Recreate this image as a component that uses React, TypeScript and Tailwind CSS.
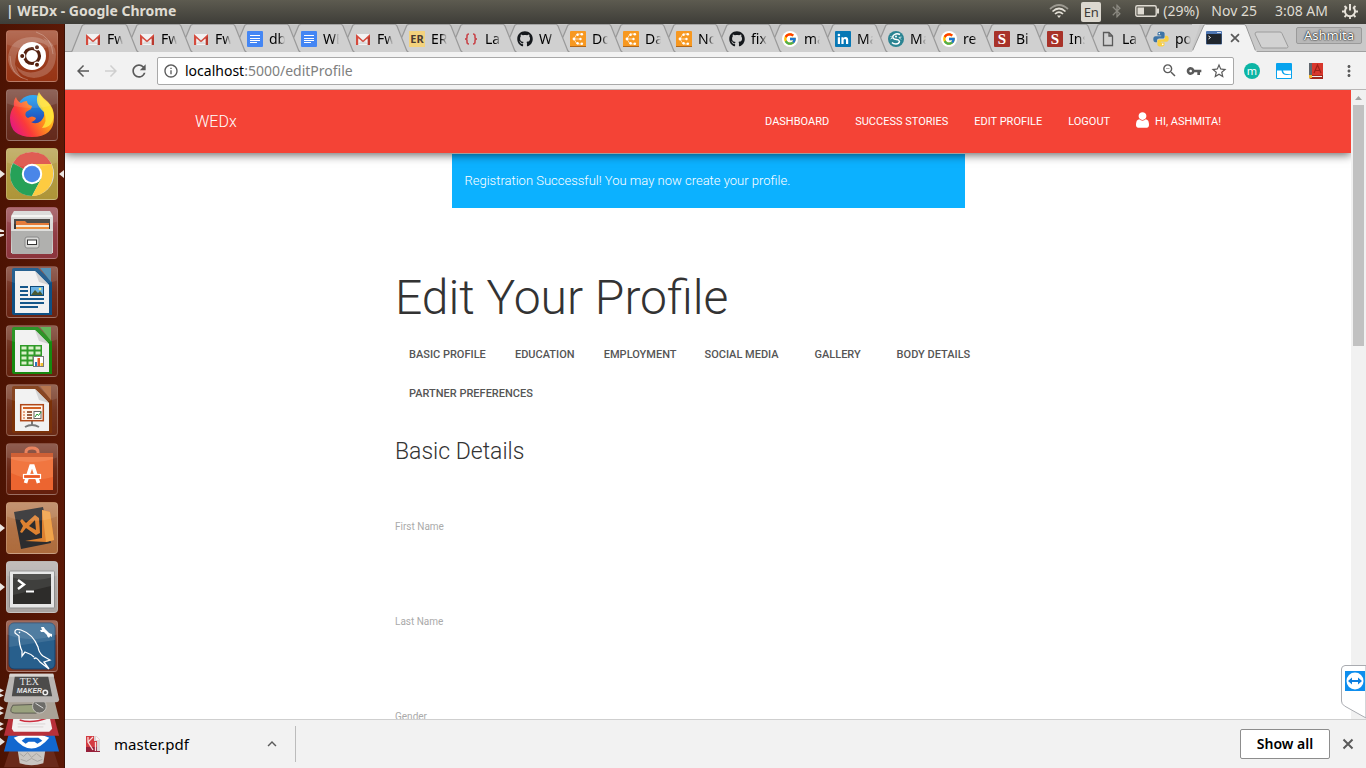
import React from "react";
import {
  MdArrowBack,
  MdArrowForward,
  MdRefresh,
  MdInfoOutline,
  MdZoomOut,
  MdVpnKey,
  MdStarBorder,
  MdMoreVert,
  MdExpandLess,
  MdBluetooth,
} from "react-icons/md";
import { FaGithub } from "react-icons/fa";
import { FcGoogle } from "react-icons/fc";

/* ---------- Favicons ---------- */

const Gmail = () => (
  <svg viewBox="0 0 16 16" className="size-4">
    <path d="M1 3h14v11H1z" fill="#f2f2f2" />
    <path d="M3 13l5-5 5 5z" fill="#dcdcdc" />
    <path d="M1 3l7 6.4L15 3v11h-2.200V7.200L8 11.300 3.200 7.200V14H1z" fill="#d54b3d" />
    <path d="M12.800 7.200L15 5v9h-2.200z" fill="#b93a2f" />
  </svg>
);

const Docs = () => (
  <svg viewBox="0 0 16 16" className="size-4">
    <rect width="16" height="16" rx="1" fill="#4486f4" />
    <path d="M3 4.500h10M3 7.500h10M3 9.500h10M3 11.500h7" stroke="#fff" strokeWidth="1" />
  </svg>
);

const Er = () => (
  <span className="flex size-4 items-center justify-center bg-[#f3d27d] text-[11px] leading-4 font-bold text-[#4a3b33]">
    ER
  </span>
);

const Braces = () => (
  <svg viewBox="0 0 16 16" className="size-4" fill="none" stroke="#c8474c" strokeWidth="1.600">
    <path d="M6 3Q4 3 4 5v1.500Q4 8 2 8q2 0 2 1.500V11q0 2 2 2M10 3q2 0 2 2v1.500Q12 8 14 8q-2 0-2 1.500V11q0 2-2 2" />
  </svg>
);

const Github = () => <FaGithub className="size-4 text-[#15181c]" />;

const Lucid = () => (
  <svg viewBox="0 0 16 16" className="size-4">
    <rect width="16" height="16" rx="1" fill="#f79820" />
    <path d="M0 15h16v1H0z" fill="#b0661a" />
    <path d="M11.500 3H7L4 8l3 5h4.500M4 8h7" stroke="#fde6c8" strokeWidth=".8" fill="none" />
    <g fill="#fff">
      <circle cx="11.800" cy="3.200" r="1.300" />
      <circle cx="7.600" cy="3.800" r="1.200" />
      <circle cx="4" cy="8" r="1.400" />
      <circle cx="10.500" cy="8" r="1.200" />
      <circle cx="7.600" cy="12.200" r="1.200" />
      <circle cx="11.800" cy="12.800" r="1.300" />
    </g>
  </svg>
);

const Google = () => (
  <span className="flex size-4 items-center justify-center rounded-full bg-white">
    <FcGoogle className="size-3.5" />
  </span>
);

const LinkedIn = () => (
  <svg viewBox="0 0 16 16" className="size-4">
    <rect width="16" height="16" rx="1" fill="#0878b5" />
    <circle cx="3.900" cy="4" r="1.300" fill="#fff" />
    <path d="M2.800 6.200H5V13H2.800zM6.400 6.200h2.100v1c.4-.7 1.200-1.200 2.200-1.200 2 0 2.500 1.300 2.500 3.200V13H11V9.600c0-.9-.1-1.700-1.100-1.700S8.600 8.700 8.600 9.600V13H6.400z" fill="#fff" />
  </svg>
);

const Teal = () => (
  <svg viewBox="0 0 16 16" className="size-4">
    <circle cx="8" cy="8" r="8" fill="#2b8492" />
    <path d="M12 3.500Q9 2 6.500 3.500T5 7q1 1.500 3.500 1.500t3 2Q11 13 8 13t-4-1.500" stroke="#fff" strokeWidth="1.400" fill="none" />
    <path d="M2.500 5l2 2-2 1M13.500 6l-2.500.5 2 2" stroke="#cfe6e9" strokeWidth="1" fill="none" />
    <circle cx="8" cy="5.500" r="1" fill="#fff" />
  </svg>
);

const Slant = () => (
  <span className="flex size-4 items-center justify-center rounded-[1px] bg-[#a83229] font-['Liberation_Serif',serif] text-[15px] leading-4 font-bold text-white">
    S
  </span>
);

const PageIcon = () => (
  <svg viewBox="0 0 16 16" className="size-4" fill="none" stroke="#5a5a5a" strokeWidth="1.300">
    <path d="M3.500 1.500H9L12.500 5v9.500h-9zM9 1.500V5h3.500" />
  </svg>
);

const Python = () => (
  <svg viewBox="0 0 16 16" className="size-4">
    <path d="M8 .5C5.500.5 4.500 1.200 4.500 2.600v1.900h3.700v.7H2.600C1 5.200.3 6.500.3 8.200s.8 3 2.200 3H4V9.500C4 8.200 5 7.500 6.200 7.500h3.600c1 0 1.800-.8 1.800-1.800V2.600C11.600 1.200 10.500.5 8 .5z" fill="#3d74a6" />
    <path d="M8 15.500c2.500 0 3.500-.7 3.500-2.100v-1.900H7.800v-.7h5.600c1.600 0 2.300-1.300 2.300-3s-.8-3-2.200-3H12v1.700c0 1.300-1 2-2.200 2H6.200c-1 0-1.800.8-1.800 1.800v3.100c0 1.400 1.100 2.100 3.600 2.100z" fill="#f9cf42" />
    <circle cx="6.300" cy="2.600" r=".8" fill="#fff" />
    <circle cx="9.700" cy="13.400" r=".8" fill="#fff" />
  </svg>
);

const TermFav = () => (
  <svg viewBox="0 0 16 16" className="size-4">
    <rect y="1" width="16" height="13.500" rx="1" fill="#4d76b3" />
    <rect x=".5" y="4" width="15" height="10" fill="#20262e" />
    <path d="M2.500 6l2 1.500-2 1.500" stroke="#fff" strokeWidth="1" fill="none" />
    <path d="M11 2.500h4" stroke="#cfdcf0" strokeWidth="1" />
  </svg>
);

const Cross = ({ className }: { className: string }) => (
  <svg viewBox="0 0 16 16" className={className} fill="none" stroke="currentColor" strokeWidth="2">
    <path d="M3.500 3.500l9 9M12.500 3.500l-9 9" />
  </svg>
);

const tabs: { icon: () => React.ReactElement; title: string }[] = [
  { icon: Gmail, title: "Fw" },
  { icon: Gmail, title: "Fw" },
  { icon: Gmail, title: "Fw" },
  { icon: Docs, title: "db" },
  { icon: Docs, title: "WE" },
  { icon: Gmail, title: "Fw" },
  { icon: Er, title: "ER" },
  { icon: Braces, title: "La" },
  { icon: Github, title: "W" },
  { icon: Lucid, title: "Do" },
  { icon: Lucid, title: "Da" },
  { icon: Lucid, title: "No" },
  { icon: Github, title: "fix" },
  { icon: Google, title: "ma" },
  { icon: LinkedIn, title: "Ma" },
  { icon: Teal, title: "Ma" },
  { icon: Google, title: "re" },
  { icon: Slant, title: "Bi" },
  { icon: Slant, title: "Ins" },
  { icon: PageIcon, title: "La" },
  { icon: Python, title: "po" },
];

/* ---------- Launcher icons (52 x 52 artwork) ---------- */

const UbuntuIcon = () => (
  <>
    <path d="M2 30Q2 8 26 7q14 0 19 12-7-8-19-7Q10 14 9 34q2 10 9 15Q4 44 2 30zM50 24q0 22-22 24-14-1-18-12 8 8 19 6 15-3 14-20-1-8-6-14 12 4 13 16z" fill="#fff" fillOpacity=".2" />
    <path d="M30 2q16 5 17 22M22 50Q4 46 4 26" stroke="#fff" strokeOpacity=".25" fill="none" />
    <circle cx="26" cy="26" r="14" fill="#fff" />
    <circle cx="26" cy="26" r="7.500" fill="none" stroke="#54200f" strokeWidth="3.200" />
    <g fill="#54200f" stroke="#fff" strokeWidth="1.200">
      <circle cx="16.200" cy="26" r="2.600" />
      <circle cx="31" cy="17.300" r="2.600" />
      <circle cx="31" cy="34.700" r="2.600" />
    </g>
  </>
);

const FirefoxIcon = () => (
  <>
    <defs>
      <linearGradient id="ff" x1="0" y1=".8" x2="1" y2=".2">
        <stop offset="0" stopColor="#e0148c" />
        <stop offset=".3" stopColor="#fb3a3a" />
        <stop offset=".65" stopColor="#ff9a1a" />
        <stop offset="1" stopColor="#ffe234" />
      </linearGradient>
      <linearGradient id="ffb" x1="0" y1="0" x2="0" y2="1">
        <stop offset="0" stopColor="#1ba2f2" />
        <stop offset="1" stopColor="#2635a8" />
      </linearGradient>
    </defs>
    <circle cx="27" cy="23" r="17" fill="url(#ffb)" />
    <path d="M10 8q1 4 5 6 3-2 6-2 0 4 5 5l-1 3-5 3q-2 4 2 6 4-3 8 0-1 3-5 4 5 3 10-1 5-5 2-12-7-8-3-15 3 4 8 8 6 6 6 15 0 20-22 20T4 29q0-6 4-12-1-5 2-9z" fill="url(#ff)" />
    <path d="M33 3q3 7 9 11 7 8 5 17-3 8-11 8 6-7 2-16-11-9-5-20z" fill="#ffe63b" fillOpacity=".85" />
  </>
);

const ChromeIcon = () => (
  <>
    <circle cx="26" cy="26" r="22" fill="#ddd" />
    <path d="M26 26L7 15Q13 4 26 4t19 11v3H26z" fill="#dc4b40" />
    <path d="M26 26L7 15q-7 15 3 26 6 7 16 7l9-17z" fill="#26a158" />
    <path d="M26 16h19.500Q50 28 43 39.500 36 48 26 48l9-17z" fill="#fdcb41" />
    <circle cx="26" cy="26" r="10.200" fill="#fff" />
    <circle cx="26" cy="26" r="8.200" fill="#4a86e8" />
  </>
);

const FilesIcon = () => (
  <>
    <path d="M8 4h36l3 5v37H5V9z" fill="#d9d9d7" />
    <path d="M6 8h40v2H6z" fill="#f3f3f1" />
    <path d="M8 12h36v13H8z" fill="#3b3936" />
    <path d="M10 14h9l2 2h22v9H10z" fill="#e46e24" />
    <path d="M10 18h33v7H10z" fill="#f6ead5" />
    <path d="M10 20h33v5H10z" fill="#ef8f3c" />
    <path d="M5 22h42l-1 25H6z" fill="#b0b0ae" />
    <path d="M5 22h42v2H5z" fill="#dededc" />
    <rect x="19" y="30" width="14" height="11" rx="2" fill="#d7d7d5" stroke="#888" />
    <rect x="21.500" y="33" width="9" height="4.500" fill="#fff" stroke="#333" />
  </>
);

const sheet = (edge: string, corner: string) => (
  <>
    <path d="M8 2h24l14 14v33H8q-2 0-2-2V4q0-2 2-2z" fill={edge} />
    <path d="M34 2h11v14z" fill={corner} />
    <path d="M9 5h20l14 14v28H9z" fill="#f1f1f1" />
    <path d="M29 5l14 14-10-3z" fill="#cfcfcf" />
  </>
);

const WriterIcon = () => (
  <>
    {sheet("#0f5084", "#4386ad")}
    <path d="M14 21h8M14 25h8M14 29h8M14 33h24M14 37h24M14 41h18" stroke="#15578a" strokeWidth="2" />
    <rect x="24.500" y="20.500" width="13" height="9" fill="#6bb3e4" stroke="#0e4b7a" />
    <path d="M25 29l4-5 3 3 2-2 3 4z" fill="#4b5a32" />
    <circle cx="34" cy="23" r="1.300" fill="#fff07a" />
  </>
);

const CalcIcon = () => (
  <>
    {sheet("#178a10", "#52ad49")}
    <path d="M14 20h22v21H14z" fill="#2f9a28" />
    <path d="M15.500 21.500h5v3h-5zm7 0h5v3h-5zm7 0h5v3h-5zm-14 5h5v3h-5zm7 0h5v3h-5zm7 0h5v3h-5zm-14 5h5v3h-5zm7 0h4v3h-4zm-7 5h5v3h-5zm7 0h4v3h-4z" fill="#d9f0c9" />
    <rect x="27.500" y="31.500" width="10" height="10" fill="#fff" stroke="#777" />
    <path d="M29 37h2v4h-2z" fill="#2a78c0" />
    <path d="M31.500 33h2.500v8h-2.500z" fill="#df5a28" />
    <path d="M34.500 38H37v3h-2.500z" fill="#f0c02d" />
  </>
);

const ImpressIcon = () => (
  <>
    {sheet("#7b3209", "#b0683c")}
    <path d="M26 37v5M19 43q7-4 14 0" stroke="#777" strokeWidth="2" fill="none" />
    <rect x="14.700" y="20.700" width="22.600" height="16" fill="#fff4ea" stroke="#b04718" strokeWidth="1.500" />
    <path d="M17 24h18" stroke="#d26023" strokeWidth="2" />
    <path d="M17 28h2M17 31h2M17 34h2" stroke="#e08b62" strokeWidth="1.600" />
    <path d="M21 28h5M21 31h5M21 34h5" stroke="#7a2e0b" strokeWidth="1.600" />
    <rect x="28" y="27.500" width="7" height="7" fill="#fff" stroke="#666" />
    <path d="M29 33l2-3 1.500 1.500L35 28" stroke="#259a31" fill="none" />
  </>
);

const SoftwareIcon = () => (
  <>
    <path d="M20 14V9q0-4 6-4t6 4v5" stroke="#e8764d" strokeWidth="3" fill="none" />
    <path d="M5 10h42v37H5z" fill="#ec6530" />
    <path d="M5 10h42v4H5z" fill="#c94e20" />
    <path d="M5 14h42v20Q26 40 5 30z" fill="#f58850" fillOpacity=".5" />
    <path d="M19.500 40L25 23h2l5.500 17" stroke="#fff" strokeWidth="3.600" fill="none" />
    <rect x="17.500" y="31.500" width="17" height="4" fill="#ec5a24" stroke="#fff" strokeWidth="1.200" />
  </>
);

const CodeIcon = () => (
  <>
    <path d="M8 10l29-5 8 36-30 6z" fill="#2c2c2e" />
    <path d="M36 8l8 2 4 28-8 2-21-1 17-3z" fill="#dd8130" />
    <path d="M36 8l8 2 4 28-8 2z" fill="#f0a34a" />
    <path d="M29 13l4 3 1 15-4 2-10-7-4 5-2-1 3-6-3-5 2-2 4 4zM29 18l-6 6 7 4z" fill="#dd8130" fillRule="evenodd" />
  </>
);

const TerminalIcon = () => (
  <>
    <rect x="3.500" y="10" width="45" height="37" rx="1" fill="#e6e6e6" stroke="#8c8c8c" />
    <rect x="7" y="13" width="38" height="30" fill="#2d2c2a" />
    <path d="M7 13h38v12L7 34z" fill="#fff" fillOpacity=".09" />
    <path d="M12 19l6 4.500-6 4.500" stroke="#fff" strokeWidth="2.400" fill="none" />
    <path d="M20 30.500h8" stroke="#fff" strokeWidth="2.200" />
  </>
);

const MysqlIcon = () => (
  <>
    <rect x="3" y="3" width="46" height="46" rx="5" fill="#285f8c" stroke="#17406a" />
    <path d="M3 27V8q0-5 5-5h36q5 0 5 5v12z" fill="#fff" fillOpacity=".1" />
    <path d="M9 13q-1-5 6-3 12 4 17 17 1 6 5 9l7 4-6 2 5 7-9-7q-4-6-6-3M9 13l4 3q0 9 3 15l0 5 3-4q6 2 9 5M13 12l1 1" stroke="#fff" strokeWidth="1.300" fill="none" />
    <path d="M37 9l7 7" stroke="#fff" strokeWidth="3" />
    <path d="M35 7l3 0 1 3-1 2-3 0-1-2 2 0zM42 13l4 1 0 3-2-1-1 2-2-2z" fill="#fff" />
  </>
);

const launcher: {
  name: string;
  art: () => React.ReactElement;
  bg: string;
  arrow?: "one" | "two";
  focused?: boolean;
}[] = [
  { name: "Dash", art: UbuntuIcon, bg: "bg-[#973414]" },
  { name: "Firefox", art: FirefoxIcon, bg: "bg-[#64291b]" },
  { name: "Chrome", art: ChromeIcon, bg: "bg-[#ae9538]", arrow: "one", focused: true },
  { name: "Files", art: FilesIcon, bg: "bg-[#8c343c]", arrow: "two" },
  { name: "Writer", art: WriterIcon, bg: "bg-[#6a2413]" },
  { name: "Calc", art: CalcIcon, bg: "bg-[#65230f]" },
  { name: "Impress", art: ImpressIcon, bg: "bg-[#6c2a14]" },
  { name: "Software", art: SoftwareIcon, bg: "bg-[#651f0c]" },
  { name: "Code", art: CodeIcon, bg: "bg-[#ad6b3c]", arrow: "one" },
  { name: "Terminal", art: TerminalIcon, bg: "bg-[#a9a4a1]", arrow: "one" },
  { name: "Workbench", art: MysqlIcon, bg: "bg-[#7a3320]" },
];

const LauncherStack = () => (
  <svg viewBox="0 0 65 96" className="h-24 w-full shrink-0">
    <path d="M10 78h44l6 18H4z" fill="#6a2a1a" />
    <path d="M18 79h28l-2 13q-12 4-24 0z" fill="#c9c6c2" />
    <path d="M20 82l4 3 4-4 4 5 5-4 5 4M21 88l6 2 5-3 6 3 5-2" stroke="#a8a5a1" fill="none" />
    <path d="M9 62h46l5 18H4z" fill="#1267cf" />
    <path d="M14 66q18 22 36 0l-8-3H22z" fill="#fff" />
    <path d="M22 69l4-3h13l4 3-5 3-3-2h-6l-3 2z" fill="#1267cf" />
    <path d="M9 45h46l5 19H4z" fill="#b8303a" />
    <path d="M14 43h36l3 14-3 3H14l-2-3z" fill="#f3f1f1" />
    <path d="M20 48q12 4 28-2" stroke="#cc2c3d" fill="none" strokeWidth="1.500" />
    <path d="M18 52h28M18 55h26" stroke="#d9d4d4" fill="none" />
    <path d="M9 27h46l5 20H4z" fill="#aaa296" />
    <path d="M13 33q-5 8 2 8h22l4-9z" fill="#9aa27e" stroke="#5c5b52" />
    <circle cx="40" cy="34" r="7" fill="#6d6c68" stroke="#c4c2bc" />
    <path d="M36 31l8 5" stroke="#ddd" />
    <path d="M10 1h44l6 26q0 3-3 3H7q-3 0-3-3z" fill="#b9b5b2" />
    <path d="M10 1h44l1 3H9z" fill="#d7d4d1" />
    <path d="M15 4h34l4 20H12z" fill="#4c4b4a" />
    <text x="20" y="12" fontSize="10" fill="#e6e6e6" fontFamily="Liberation Serif, serif">
      TEX
    </text>
    <text x="17" y="21" fontSize="7" fill="#e6e6e6" fontFamily="Liberation Sans, sans-serif" fontWeight="bold" fontStyle="italic">
      MAKER
    </text>
    <circle cx="46" cy="20" r="2.300" fill="none" stroke="#eee" strokeWidth="1.500" />
    <g fill="#e6e0dc">
      <path d="M0 16l4 2-4 2zM0 21l4 2-4 2zM0 34l4 2-4 2zM0 39l4 2-4 2zM0 50l4 2-4 2zM0 55l4 2-4 2zM0 66l5 4-5 4z" />
    </g>
  </svg>
);

function Launcher() {
  return (
    <nav aria-label="Launcher" className="flex w-[65px] shrink-0 flex-col overflow-hidden border-r border-[#3c1206] bg-linear-to-r from-[#4c1303] to-[#5c1906] pt-1.5">
      {launcher.map(({ name, art: Art, bg, arrow, focused }) => (
        <div key={name} className="mb-[7px] flex shrink-0 items-center">
          <svg viewBox="0 0 6 16" className="h-4 w-1.5 shrink-0" fill="#ece6e2">
            {arrow === "one" && <path d="M0 4l5 4-5 4z" />}
            {arrow === "two" && <path d="M0 4l4 1.500V7H0zM0 9h4v1.500L0 12z" />}
          </svg>
          <button type="button" aria-label={name} className={`size-13 shrink-0 overflow-hidden rounded-sm border border-white/20 ${bg} bg-linear-to-b from-white/20 via-white/5 to-transparent`}>
            <svg viewBox="1 1 50 50" className="size-full">
              <Art />
              <path d="M0 0h52v14Q26 24 0 14z" fill="#fff" fillOpacity=".1" />
            </svg>
          </button>
          <svg viewBox="0 0 6 16" className="h-4 w-1.5 shrink-0" fill="#ece6e2">
            {focused && <path d="M6 4L1 8l5 4z" />}
          </svg>
        </div>
      ))}
      <div className="-mt-[7px] flex shrink-0">
        <LauncherStack />
      </div>
    </nav>
  );
}

/* ---------- Desktop top panel ---------- */

function TopPanel() {
  return (
    <header className="flex h-6 shrink-0 items-center bg-linear-to-b from-[#5d5b50] to-[#3e3d38] px-1.5 pb-0.5 text-[14px] leading-5 text-[#dfdbd2]">
      <span className="font-bold">| WEDx - Google Chrome</span>
      <div className="ml-auto flex items-center pr-0.5">
        <svg viewBox="0 0 20 14" className="h-3.5 w-5" fill="none" stroke="#e2ded5" strokeWidth="1.700">
          <path d="M1 5Q10-3 19 5" strokeOpacity=".5" />
          <path d="M3.500 7.500Q10 1.500 16.500 7.500M6 10q4-4 8 0" />
          <path d="M8 11.500h4L10 14z" fill="#e2ded5" stroke="none" />
        </svg>
        <span className="mt-0.5 ml-3 flex h-5 w-5 items-center justify-center rounded-xs bg-[#dcd8cf] text-[13px] text-[#3c3b37]">En</span>
        <MdBluetooth className="ml-2 size-4 text-[#8b8981]" />
        <svg viewBox="0 0 24 14" className="ml-2.5 h-3.5 w-6">
          <rect x=".8" y="1.800" width="20.400" height="10.400" rx="1.500" fill="none" stroke="#dfdbd2" strokeWidth="1.400" />
          <rect x="2.500" y="3.500" width="6.500" height="7" fill="#dfdbd2" />
          <path d="M22 4.500h2v5h-2z" fill="#dfdbd2" />
        </svg>
        <span className="ml-1">(29%)</span>
        <span className="ml-3">Nov 25</span>
        <span className="ml-[18px]">3:08 AM</span>
        <svg viewBox="0 0 16 16" className="ml-3.5 size-4" fill="none" stroke="#e6e2d9">
          <path d="M5 4.300a5 5 0 1 0 6 0" strokeWidth="2" />
          <path d="M8 1v6.500" strokeWidth="2" />
          <path d="M3 8.500H0M16 8.500h-3M4.500 12l-2 2M11.500 12l2 2M8 13v3M4.500 5l-2-2M11.500 5l2-2" strokeWidth="1.800" />
        </svg>
      </div>
    </header>
  );
}

/* ---------- Browser chrome ---------- */

const TabEdge = ({ first }: { first: boolean }) => (
  <svg viewBox="0 0 14 28" className="h-7 w-3.5 shrink-0" fill="none" stroke="#999" strokeWidth="1.200">
    {first ? (
      <>
        <path d="M0 0h12L1 28H0z" fill="#c9c9c9" stroke="none" />
        <path d="M0 28Q1 27.500 1.500 26L11 2Q12 .5 14 .5" />
      </>
    ) : (
      <>
        <path d="M1 0h12L7 14z" fill="#c6c6c6" stroke="none" />
        <path d="M0 .5Q1 .5 2 2l9.500 24q.5 1.500 2 2M6.500 14L11.500 2Q12 .5 14 .5" />
      </>
    )}
  </svg>
);

function TabStrip() {
  return (
    <div className="flex h-7 shrink-0 border-b border-[#a0a0a0] bg-[#c9c9c9] pl-1.5">
      <div role="tablist" className="flex min-w-0 flex-1">
        {tabs.map(({ icon: Icon, title }, i) => (
          <button key={i} role="tab" aria-selected="false" type="button" className={`flex h-7 min-w-0 items-center bg-[#d0d0d0] ${i < 8 ? "flex-54" : "flex-53"}`}>
            <TabEdge first={i === 0} />
            <span className="flex h-7 min-w-0 flex-1 items-center overflow-hidden border-t border-[#a3a3a3]">
              <span className="size-4 shrink-0">
                <Icon />
              </span>
              <span className="ml-1.5 w-4 shrink-0 overflow-hidden mask-r-from-60% mask-r-to-100% text-left text-[14px] whitespace-nowrap text-black">
                {title}
              </span>
            </span>
          </button>
        ))}
        <div className="flex h-7 min-w-0 flex-53 bg-[#c9c9c9]">
          <button role="tab" aria-selected="true" type="button" aria-label="WEDx" className="relative z-10 flex h-7 w-[66px] shrink-0 items-center">
            <svg viewBox="0 0 66 28" className="absolute inset-0 h-7 w-[66px]">
              <path d="M0 0h8L0 24z" fill="#d0d0d0" />
              <path d="M0 28L11.500 2q.5-1.500 2-1.500H52q1.500 0 2 1.500L64 28z" fill="#f2f2f2" stroke="#999" />
              <path d="M0 27.500h64.500" stroke="#f2f2f2" strokeWidth="2" />
            </svg>
            <span className="relative ml-3.5 size-4">
              <TermFav />
            </span>
            <Cross className="relative ml-1.5 size-3.5 text-[#5a5a5a]" />
          </button>
        </div>
      </div>
      <div className="flex w-[121px] shrink-0 justify-between pr-1 pl-[9px]">
        <button type="button" aria-label="New tab" className="mt-1">
          <svg viewBox="0 0 35 18" className="h-[18px] w-[35px]">
            <path d="M3 1h23q1.500 0 2 1.500l6 13q0 1.500-1.500 1.500H9q-1.500 0-2-1.500L1 3Q1 1 3 1z" fill="#d2d2d2" stroke="#9c9c9c" />
          </svg>
        </button>
        <button type="button" className="mt-[3px] h-[17px] w-[66px] rounded-xs border border-[#9a9a9a] bg-[#b8b8b8] text-[13px] leading-[15px] text-white text-shadow-[0_0_1px_#000,0_0_2px_#000]">
          Ashmita
        </button>
      </div>
    </div>
  );
}

function Toolbar() {
  return (
    <div className="flex h-[38px] shrink-0 items-center border-b border-[#b8b6b6] bg-[#f2f2f2] pr-2 pl-[9px] text-[#5a5a5a]">
      <button type="button" aria-label="Back"><MdArrowBack className="size-[18px]" /></button>
      <button type="button" aria-label="Forward" className="ml-2.5 text-[#cfcfcf]"><MdArrowForward className="size-[18px]" /></button>
      <button type="button" aria-label="Reload" className="ml-[9px]"><MdRefresh className="size-5" /></button>
      <div className="ml-2 flex h-7 min-w-0 flex-1 items-center rounded-xs border border-[#a9a9a9] bg-white pr-[5px] pl-[5px]">
        <MdInfoOutline className="size-4 shrink-0" />
        <span className="ml-1.5 flex-1 text-[14px] text-[#808080]">
          <span className="text-black">localhost</span>:5000/editProfile
        </span>
        <MdZoomOut className="size-[17px]" />
        <MdVpnKey className="ml-2 size-4" />
        <MdStarBorder className="ml-2 size-[18px]" />
      </div>
      <span className="ml-2.5 flex size-4 items-center justify-center rounded-full bg-[#0cb5a5] text-[11px] leading-4 text-white">m</span>
      <svg viewBox="0 0 16 16" className="ml-4 size-4">
        <rect width="16" height="16" rx="1" fill="#07a3ee" />
        <path d="M1 7.500h4.500q.5 4.500 5.500 4.500l4-.5V15H1zM7 7.500h8V11h-4q-3.500 0-4-3.500z" fill="#fff" />
      </svg>
      <svg viewBox="0 0 16 16" className="ml-4 size-4">
        <path d="M1 0h14v12H1z" fill="#d8372c" />
        <path d="M1 0h3v13H1z" fill="#5f666d" />
        <path d="M1 13q0-1 2-1h12v4H3q-2 0-2-2z" fill="#a3271d" />
        <path d="M4 13.500h10" stroke="#eee" />
        <path d="M6 10l3.500-8L13 10M7.500 7.500h4" stroke="#9f2018" strokeWidth="1.200" fill="none" />
        <path d="M1 12h3v3H1z" fill="#f0b429" />
      </svg>
      <button type="button" aria-label="Menu" className="ml-4"><MdMoreVert className="size-[18px]" /></button>
    </div>
  );
}

function DownloadBar() {
  return (
    <footer className="flex h-[49px] shrink-0 items-center border-t border-[#cfcfcf] bg-[#f2f2f2] pr-2.5">
      <div className="flex h-9 w-[231px] items-center border-r border-[#bcbcbc] pr-3.5 pl-5">
        <svg viewBox="0 0 16 18" className="h-[18px] w-4">
          <path d="M1 1h10l4 4v12H1z" fill="#d33a40" />
          <path d="M1 12h14v5H1z" fill="#96203a" />
          <path d="M9 1h2l4 4v11h-3V6H9z" fill="#d9d4d4" />
          <path d="M11 1v4h4z" fill="#f6f3f3" />
          <path d="M8 2L3 7l5 8M3 2v5M10.500 7v9" stroke="#f7dada" strokeWidth="1.300" fill="none" />
        </svg>
        <span className="ml-[13px] text-[15px] text-black">master.pdf</span>
        <button type="button" aria-label="Download options" className="ml-auto text-[#5a5a5a]"><MdExpandLess className="size-[18px]" /></button>
      </div>
      <button type="button" className="ml-auto h-[30px] w-[90px] rounded-xs border border-[#8d8d8d] bg-white pb-0.5 text-[14px] font-semibold text-black">
        Show all
      </button>
      <button type="button" aria-label="Close downloads" className="ml-2.5 text-[#5a5a5a]"><Cross className="size-4" /></button>
    </footer>
  );
}

/* ---------- Web page ---------- */

const sections = ["BASIC PROFILE", "EDUCATION", "EMPLOYMENT", "SOCIAL MEDIA", "GALLERY", "BODY DETAILS", "PARTNER PREFERENCES"];

const fields = [
  { id: "first-name", label: "First Name" },
  { id: "last-name", label: "Last Name" },
  { id: "gender", label: "Gender" },
];

function ProfilePage() {
  return (
    <div className="min-w-0 flex-1 overflow-hidden bg-white font-[Roboto,sans-serif]">
      <nav className="relative z-10 h-[63px] bg-[#f44336] shadow-[0_2px_9px_rgba(0,0,0,0.6)]">
        <div className="mx-auto flex h-full w-full max-w-[1026px] items-center text-white">
          <a href="#home" className="text-[16px] font-light">WEDx</a>
          <div className="ml-auto flex items-center gap-[26px] pt-0.5 text-[11px]">
            <a href="#dashboard">DASHBOARD</a>
            <a href="#stories">SUCCESS STORIES</a>
            <a href="#edit">EDIT PROFILE</a>
            <a href="#logout">LOGOUT</a>
            <a href="#me" className="flex items-center gap-1.5">
              <svg viewBox="0 128 1280 1536" className="mb-1.5 h-4 w-[13px]" fill="#fff">
                <path d="M1280 1399q0 109-62.500 187t-150.500 78h-854q-88 0-150.500-78t-62.500-187q0-85 8.500-160.500t31.500-152 58.500-131 94-89 134.500-34.500q131 128 313 128t313-128q76 0 134.500 34.500t94 89 58.500 131 31.500 152 8.500 160.500zm-256-887q0 159-112.500 271.500t-271.500 112.500-271.500-112.500-112.500-271.500 112.500-271.500 271.500-112.500 271.500 112.500 112.500 271.500z" />
              </svg>
              HI, ASHMITA!
            </a>
          </div>
        </div>
      </nav>
      <div role="status" className="mx-auto mt-px flex h-[54px] w-full max-w-[513px] items-center bg-[#0cb1ff] px-[13px] text-[13px] font-light text-white">
        Registration Successful! You may now create your profile.
      </div>
      <main className="mx-auto w-full max-w-[626px] pt-[63px] text-[#333]">
        <h1 className="text-[48px] leading-[54px] font-light">Edit Your Profile</h1>
        <div className="mt-[11px] flex flex-wrap">
          {sections.map((s) => (
            <button key={s} type="button" className="h-[39px] min-w-[90px] px-3.5 text-[11px] font-medium text-[#555]">
              {s}
            </button>
          ))}
        </div>
        <h2 className="mt-[23px] text-[23px] leading-[30px] font-light">Basic Details</h2>
        <form className="mt-[52px]">
          {fields.map(({ id, label }) => (
            <div key={id} className="h-[95px]">
              <label htmlFor={id} className="block text-[10px] leading-4 text-[#aaa]">{label}</label>
              <input id={id} type="text" className="block h-9 w-full bg-transparent text-[14px] outline-none" />
            </div>
          ))}
        </form>
      </main>
    </div>
  );
}

function Scrollbar() {
  return (
    <div className="relative flex w-[15px] shrink-0 flex-col items-center bg-[#f1f1f1]">
      <svg viewBox="0 0 15 15" className="size-[15px] shrink-0">
        <path d="M4 10l3.500-4L11 10z" fill="#a3a3a3" />
      </svg>
      <div className="h-[241px] w-[11px] bg-[#c1c1c1]" />
      <svg viewBox="0 0 25 54" className="absolute right-0 bottom-0 h-[54px] w-[25px]">
        <path d="M25 .5H4Q.5 1 .5 4v32q0 3 3 5L25 53z" fill="#fff" stroke="#a9abb0" />
        <rect x="4" y="6" width="20" height="20" fill="#0e8eee" />
        <circle cx="14" cy="16" r="8.500" fill="#fff" />
        <path d="M7 16l4-3.500V15h6v-2.500l4 3.500-4 3.500V17h-6v2.500z" fill="#0e7fe0" />
      </svg>
    </div>
  );
}

export default function App() {
  return (
    <div className="flex h-screen flex-col overflow-hidden font-['Noto_Sans',sans-serif]">
      <TopPanel />
      <div className="flex min-h-0 flex-1">
        <Launcher />
        <div className="flex min-w-0 flex-1 flex-col">
          <TabStrip />
          <Toolbar />
          <div className="flex min-h-0 flex-1">
            <ProfilePage />
            <Scrollbar />
          </div>
          <DownloadBar />
        </div>
      </div>
    </div>
  );
}
